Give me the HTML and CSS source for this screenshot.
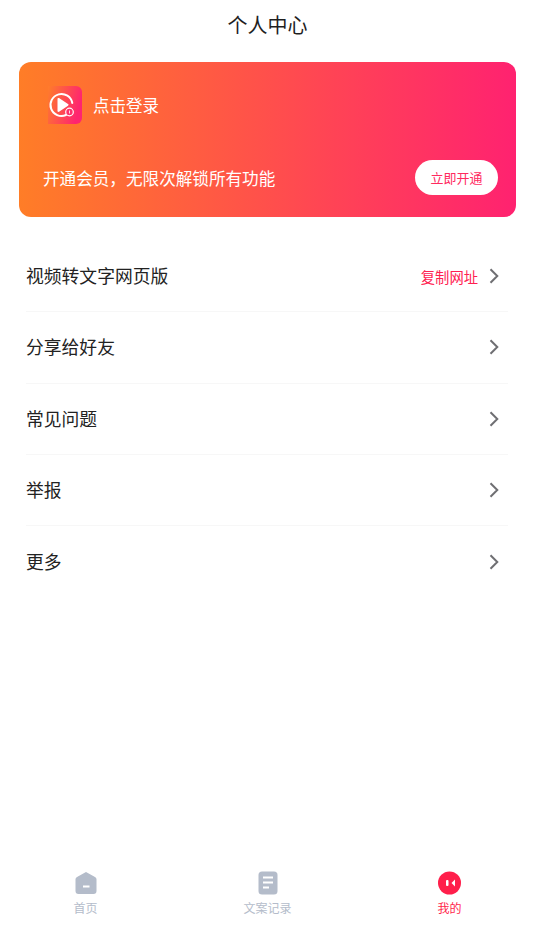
FILE: index.html
```html
<!DOCTYPE html>
<html lang="zh-CN">
<head>
    <meta charset="UTF-8">
    <meta name="viewport" content="width=device-width, initial-scale=1.0">
    <title>个人中心</title>
    <link rel="stylesheet" href="styles.css">
</head>
<body>
    <div class="page">
        <div class="title">个人中心</div>

        <div class="vip-card">
            <div class="login-row">
                <svg class="app-logo" viewBox="0 0 34 38" width="34" height="38">
                    <defs>
                        <linearGradient id="logoBg" x1="0" y1="0" x2="1" y2="0.3">
                            <stop offset="0" stop-color="#ff7d2a"/>
                            <stop offset="1" stop-color="#ff2470"/>
                        </linearGradient>
                    </defs>
                    <path d="M0 0H28a6 6 0 0 1 6 6V32a6 6 0 0 1-6 6H0z" fill="url(#logoBg)"/>
                    <path d="M18 29A11 11 0 1 1 24.300 17" fill="none" stroke="#fff" stroke-width="2" stroke-linecap="round"/>
                    <path d="M9.500 13a1 1 0 0 1 1.500-.9l9 6a1 1 0 0 1 0 1.700l-9 6a1 1 0 0 1-1.500-.9z" fill="#fff"/>
                    <circle cx="21.500" cy="26" r="3.800" fill="#ff2f6b" stroke="#fff" stroke-width="1.200"/>
                    <path d="M21.500 24.500v3" stroke="#fff" stroke-width="0.800"/>
                </svg>
                <span class="login-text">点击登录</span>
            </div>
            <div class="vip-row">
                <span class="vip-text">开通会员，无限次解锁所有功能</span>
                <span class="vip-btn">立即开通</span>
            </div>
        </div>

        <div class="menu">
            <div class="menu-item">
                <span class="menu-label">视频转文字网页版</span>
                <span class="menu-extra">复制网址</span>
                <svg class="arrow" viewBox="0 0 10 16" width="10" height="16"><path d="M1.500 1.200L8.300 8L1.500 14.800" fill="none" stroke="#6f6f73" stroke-width="2"/></svg>
            </div>
            <div class="menu-item">
                <span class="menu-label">分享给好友</span>
                <svg class="arrow" viewBox="0 0 10 16" width="10" height="16"><path d="M1.500 1.200L8.300 8L1.500 14.800" fill="none" stroke="#6f6f73" stroke-width="2"/></svg>
            </div>
            <div class="menu-item">
                <span class="menu-label">常见问题</span>
                <svg class="arrow" viewBox="0 0 10 16" width="10" height="16"><path d="M1.500 1.200L8.300 8L1.500 14.800" fill="none" stroke="#6f6f73" stroke-width="2"/></svg>
            </div>
            <div class="menu-item">
                <span class="menu-label">举报</span>
                <svg class="arrow" viewBox="0 0 10 16" width="10" height="16"><path d="M1.500 1.200L8.300 8L1.500 14.800" fill="none" stroke="#6f6f73" stroke-width="2"/></svg>
            </div>
            <div class="menu-item">
                <span class="menu-label">更多</span>
                <svg class="arrow" viewBox="0 0 10 16" width="10" height="16"><path d="M1.500 1.200L8.300 8L1.500 14.800" fill="none" stroke="#6f6f73" stroke-width="2"/></svg>
            </div>
        </div>

        <div class="tabbar">
            <div class="tab">
                <svg viewBox="0 0 24 24" width="24" height="24"><path d="M12 1L21 6a2.500 2.500 0 0 1 1.500 2.300V20a3 3 0 0 1-3 3H4.500a3 3 0 0 1-3-3V8.300A2.500 2.500 0 0 1 3 6z" fill="#b4bcca"/><rect x="9" y="14.500" width="6.500" height="2" fill="#fff"/></svg>
                <span>首页</span>
            </div>
            <div class="tab">
                <svg viewBox="0 0 24 24" width="24" height="24"><rect x="2.500" y="0.500" width="19" height="23" rx="3.500" fill="#b4bcca"/><path d="M7 6.500h10M7 11.500h10M7 16.500h6" stroke="#fff" stroke-width="2"/></svg>
                <span>文案记录</span>
            </div>
            <div class="tab tab-active">
                <svg viewBox="0 0 24 24" width="24" height="24"><circle cx="11.500" cy="12" r="11.500" fill="#ff1f4b"/><rect x="8" y="9" width="2.500" height="6" rx="1" fill="#fff"/><path d="M17 8.500L13.500 12L17 15.500z" fill="#fff"/></svg>
                <span>我的</span>
            </div>
        </div>
    </div>
</body>
</html>
```

FILE: styles.css
```css
body {
    margin: 0;
    background-color: #fff;
    font-family: "Noto Sans CJK SC", "Liberation Sans", sans-serif;
    color: #222;
}
.page {
    display: flex;
    flex-direction: column;
    height: 951px;
    overflow: hidden;
}
.title {
    text-align: center;
    font-size: 20px;
    line-height: 28px;
    padding-top: 11px;
    color: #1f1f1f;
}
.vip-card {
    margin: 23px 19px 0;
    height: 155px;
    box-sizing: border-box;
    border-radius: 12px;
    background: linear-gradient(90deg, #ff7d27 0%, #ff2270 100%);
    padding: 24px 18px 22px 24px;
    display: flex;
    flex-direction: column;
    justify-content: space-between;
    color: #fff;
}
.login-row {
    display: flex;
    align-items: center;
}
.app-logo {
    margin-left: 5px;
}
.login-text {
    font-size: 16.500px;
    margin-left: 11px;
}
.vip-row {
    display: flex;
    align-items: center;
    justify-content: space-between;
}
.vip-text {
    font-size: 16.600px;
}
.vip-btn {
    width: 83px;
    height: 35px;
    border-radius: 18px;
    background-color: #fff;
    color: #ff2a5f;
    font-size: 13px;
    display: flex;
    align-items: center;
    justify-content: center;
}
.menu {
    margin: 24px 27px 0 26px;
}
.menu-item {
    display: flex;
    align-items: center;
    height: 71.300px;
    border-bottom: 1px solid #f7f7f7;
    box-sizing: border-box;
}
.menu-item:last-child {
    border-bottom: none;
}
.menu-label {
    flex: 1;
    font-size: 17.800px;
    margin-top: -2px;
}
.menu-extra {
    font-size: 14.300px;
    color: #ff2050;
    margin-right: 11px;
}
.arrow {
    margin-right: 9px;
}
.tabbar {
    margin-top: auto;
    margin-bottom: 35px;
    display: grid;
    grid-template-columns: repeat(3, 182px);
    justify-content: center;
}
.tab {
    display: flex;
    flex-direction: column;
    align-items: center;
    gap: 4px;
    font-size: 12px;
    line-height: 17px;
    color: #b4bcca;
}
.tab-active {
    color: #ff1f4b;
}
```
